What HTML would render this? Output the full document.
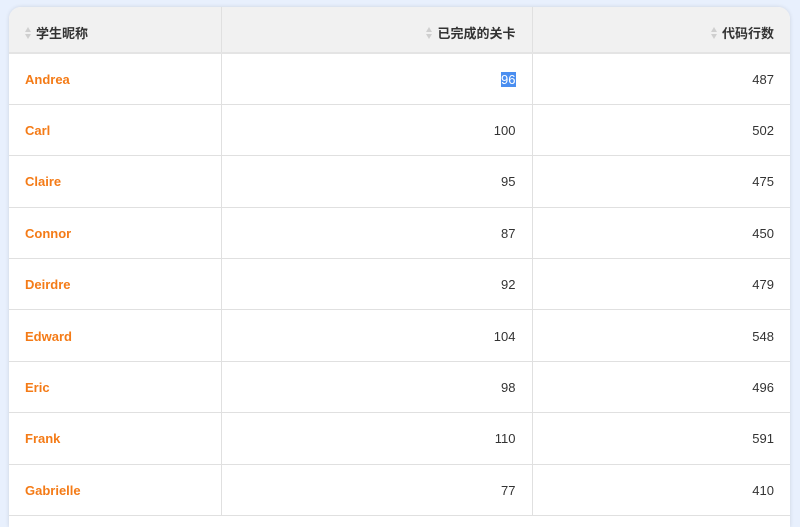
<!DOCTYPE html>
<html><head><meta charset="utf-8"><style>
body{margin:0;width:800px;height:500px;overflow:hidden;background:#e8f0fd;font-family:"Liberation Sans","Noto Sans CJK SC",sans-serif;}
.t{position:absolute;left:9px;top:7px;width:781px;height:520px;background:#fff;border-radius:12px 12px 0 0;overflow:hidden;box-shadow:0 0 4px rgba(0,0,0,.12);}
table{border-collapse:collapse;width:781px;table-layout:fixed;}
th{background:#f1f1f1;height:46px;box-sizing:border-box;padding:8px 16px 0;font-size:13px;font-weight:bold;color:#333;border-bottom:2px solid #e4e4e4;border-right:1px solid #e0e0e0;line-height:16px;}
td{height:51.4px;box-sizing:border-box;border-bottom:1px solid #e0e0e0;border-right:1px solid #e0e0e0;font-size:13px;line-height:16px;color:#333;padding:2px 16px 0;text-align:right;}
th:last-child,td:last-child{border-right:none;}
td.n{text-align:left;color:#f47b17;font-weight:bold;}
.s{display:inline-block;width:7px;height:12px;vertical-align:-1px;margin-right:4px;position:relative;}
.s:before,.s:after{content:"";position:absolute;left:0;border-left:3.5px solid transparent;border-right:3.5px solid transparent;}
.s:before{top:0;border-bottom:5px solid #cfcfcf;}
.s:after{bottom:0;border-top:5px solid #cfcfcf;}
.h{background:#4a8ef0;color:#fff;}
</style></head><body>
<div class="t"><table>
<colgroup><col style="width:212px"><col style="width:311px"><col style="width:258px"></colgroup>
<tr><th style="text-align:left"><span class="s"></span>学生昵称</th><th style="text-align:right"><span class="s"></span>已完成的关卡</th><th style="text-align:right"><span class="s"></span>代码行数</th></tr>
<tr><td class="n">Andrea</td><td><span class="h">96</span></td><td>487</td></tr>
<tr><td class="n">Carl</td><td>100</td><td>502</td></tr>
<tr><td class="n">Claire</td><td>95</td><td>475</td></tr>
<tr><td class="n">Connor</td><td>87</td><td>450</td></tr>
<tr><td class="n">Deirdre</td><td>92</td><td>479</td></tr>
<tr><td class="n">Edward</td><td>104</td><td>548</td></tr>
<tr><td class="n">Eric</td><td>98</td><td>496</td></tr>
<tr><td class="n">Frank</td><td>110</td><td>591</td></tr>
<tr><td class="n">Gabrielle</td><td>77</td><td>410</td></tr>
</table></div>
</body></html>
